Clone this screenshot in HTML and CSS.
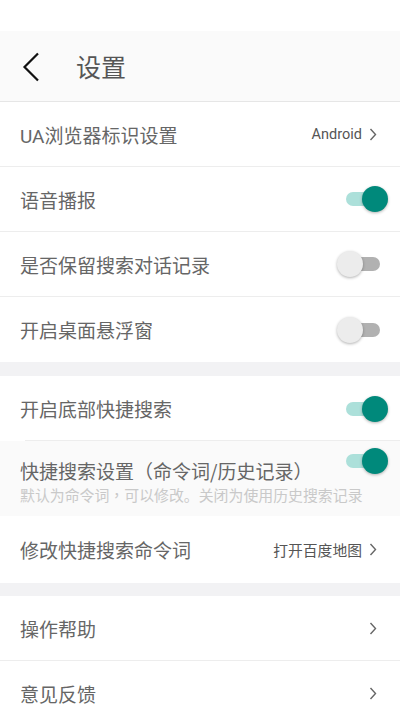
FILE: index.html
```html
<!DOCTYPE html>
<html lang="zh-CN">
<head>
<meta charset="utf-8">
<link rel="stylesheet" href="styles.css">
</head>
<body>
<div class="statusbar"></div>
<header class="toolbar">
  <svg class="back" width="18" height="30" viewBox="0 0 18 30"><path d="M16 1.5 L2.5 15 L16 28.5" fill="none" stroke="#111" stroke-width="2.2"/></svg>
  <h1 class="title">设置</h1>
</header>
<section class="group">
  <div class="row line">
    <span class="label">UA浏览器标识设置</span>
    <span class="value">Android</span>
    <svg class="chev" width="8" height="13" viewBox="0 0 8 13"><path d="M1.5 1 L6.5 6.5 L1.5 12" fill="none" stroke="#666" stroke-width="1.4"/></svg>
  </div>
  <div class="row line">
    <span class="label">语音播报</span>
    <span class="switch on"><span class="track"></span><span class="thumb"></span></span>
  </div>
  <div class="row line">
    <span class="label">是否保留搜索对话记录</span>
    <span class="switch"><span class="track"></span><span class="thumb"></span></span>
  </div>
  <div class="row">
    <span class="label">开启桌面悬浮窗</span>
    <span class="switch"><span class="track"></span><span class="thumb"></span></span>
  </div>
</section>
<div class="gap"></div>
<section class="group">
  <div class="row line-inset">
    <span class="label">开启底部快捷搜索</span>
    <span class="switch on"><span class="track"></span><span class="thumb"></span></span>
  </div>
  <div class="row tall">
    <div class="texts">
      <span class="label">快捷搜索设置<span class="punct" lang="zh-TW">（</span>命令词/历史记录<span class="punct" lang="zh-TW">）</span></span>
      <span class="sub">默认为命令词<span class="punct" lang="zh-TW">，</span>可以修改。关闭为使用历史搜索记录</span>
    </div>
    <span class="switch on top"><span class="track"></span><span class="thumb"></span></span>
  </div>
  <div class="row mid">
    <span class="label">修改快捷搜索命令词</span>
    <span class="value cjk">打开百度地图</span>
    <svg class="chev" width="8" height="13" viewBox="0 0 8 13"><path d="M1.5 1 L6.5 6.5 L1.5 12" fill="none" stroke="#666" stroke-width="1.4"/></svg>
  </div>
</section>
<div class="gap small"></div>
<section class="group">
  <div class="row line">
    <span class="label">操作帮助</span>
    <svg class="chev" width="8" height="13" viewBox="0 0 8 13"><path d="M1.5 1 L6.5 6.5 L1.5 12" fill="none" stroke="#666" stroke-width="1.4"/></svg>
  </div>
  <div class="row">
    <span class="label">意见反馈</span>
    <svg class="chev" width="8" height="13" viewBox="0 0 8 13"><path d="M1.5 1 L6.5 6.5 L1.5 12" fill="none" stroke="#666" stroke-width="1.4"/></svg>
  </div>
</section>
</body>
</html>
```
FILE: styles.css
```css
* { box-sizing: border-box; }
html, body {
  margin: 0;
  padding: 0;
  background: #fff;
  font-family: Roboto, "Noto Sans CJK SC", sans-serif;
  overflow: hidden;
}
.statusbar {
  height: 31px;
  background: #fff;
}
.toolbar {
  height: 71px;
  background: #fafafa;
  border-bottom: 1px solid #e6e6e6;
  display: flex;
  align-items: center;
  padding-left: 22px;
}
.back {
  display: block;
  margin-top: 1px;
}
.title {
  margin: 0 0 0 36px;
  font-size: 25px;
  font-weight: 400;
  color: #555;
}
.group {
  background: #fff;
}
.row {
  height: 65px;
  display: flex;
  align-items: center;
  padding: 0 24px 0 20px;
  position: relative;
}
.row.line {
  border-bottom: 1px solid #ededed;
}
.row.line-inset::after {
  content: "";
  position: absolute;
  left: 25px;
  right: 0;
  bottom: 0;
  height: 1px;
  background: #ededed;
}
.row.tall {
  height: 75px;
  background: #fafafa;
  align-items: flex-start;
  padding-top: 16px;
}
.row.mid {
  height: 67px;
}
.label {
  flex: 1;
  font-size: 19px;
  color: #666;
}
.texts {
  flex: 1;
  min-width: 0;
  display: flex;
  flex-direction: column;
}
.texts .label {
  flex: none;
  line-height: 27px;
  font-family: "Noto Sans CJK SC", sans-serif;
}
.punct {
  font-family: "Noto Sans CJK TC", sans-serif;
}
.sub {
  font-size: 14.9px;
  color: #c9c9c9;
  line-height: 21px;
  white-space: nowrap;
  font-family: "Noto Sans CJK SC", sans-serif;
}
.value {
  font-size: 14.5px;
  color: #555;
  margin-right: 7px;
}
.value.cjk {
  font-size: 14.8px;
  font-family: "Noto Sans CJK SC", sans-serif;
}
.chev {
  display: block;
  margin-right: -1px;
}
.switch {
  position: relative;
  width: 52px;
  height: 26px;
  margin-right: -13px;
  flex: none;
}
.switch.top {
  margin-top: -9px;
}
.track {
  position: absolute;
  left: 9px;
  top: 6px;
  width: 34px;
  height: 14px;
  border-radius: 7px;
  background: #b1b1b1;
}
.thumb {
  position: absolute;
  left: 0;
  top: 0;
  width: 26px;
  height: 26px;
  border-radius: 50%;
  background: #ececec;
  box-shadow: 0 1px 3px rgba(0,0,0,0.3);
}
.switch.on .track {
  background: #ace0da;
}
.switch.on .thumb {
  left: 25px;
  background: #00897b;
}
.gap {
  height: 14px;
  background: #f2f2f4;
}
.gap.small {
  height: 13px;
}
```
